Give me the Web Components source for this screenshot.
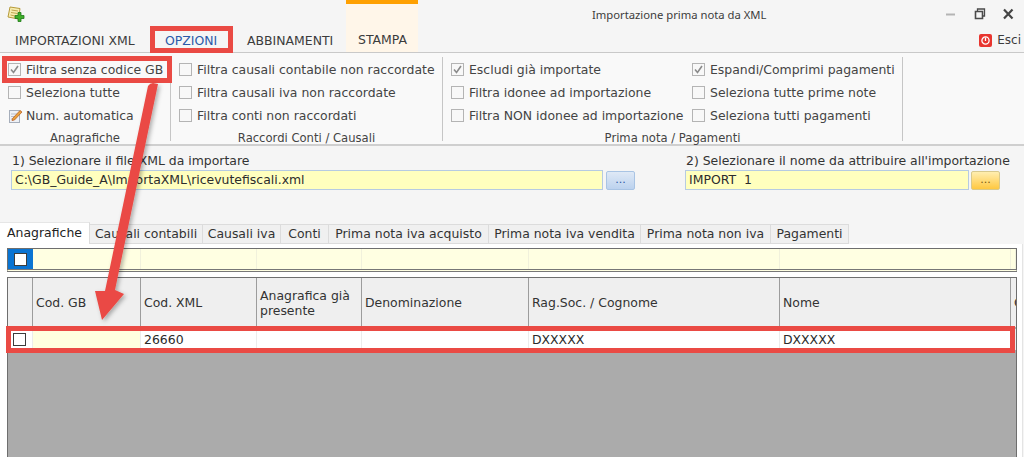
<!DOCTYPE html>
<html>
<head>
<meta charset="utf-8">
<title>Importazione prima nota da XML</title>
<style>
html, body { margin: 0; padding: 0; height: 100%; overflow: hidden; background: #f5f5f5; }
</style>
</head>
<body>
<app-window></app-window>
<script>
class TopBar extends HTMLElement {
  constructor() {
    super();
    this.shadowDOM = this.attachShadow({mode: 'open'});
  }
  connectedCallback() {
    this.shadowDOM.innerHTML = `
    <style>
    :host{
      display:grid;
      grid-template-columns:346px 72px 1fr;
      grid-template-rows:27px 25px;
      height:52px;
      border-bottom:1px solid #c9c9c9;
      font:12.45px 'DejaVu Sans',sans-serif;
      color:#3c3c3c;
    }
    .logo{ padding:6px 0 0 7px; }
    .tabs{ display:flex; align-items:center; height:25px; padding-top:1px; box-sizing:border-box; }
    .tabs span{ display:block; }
    .t1{ margin-left:15px; width:150px; }
    .t2{ width:82px; color:#2c5aa8; }
    .stampa{
      grid-column:2; grid-row:1 / span 2;
      background:#fff6e9;
      border-top:4px solid #ffa000;
      box-sizing:border-box;
      padding:27px 0 0 12px;
      line-height:18px;
    }
    .title{ position:relative; padding:8px 0 0 174px; font:11.25px 'Noto Sans',sans-serif; line-height:14px; }
    .ctrl{ position:absolute; top:0; left:0; }
    .esci{ display:flex; justify-content:flex-end; align-items:center; gap:5px; padding:1px 3px 0 0; font-size:12px; }
    .esci svg{ display:block; }
    </style>
    <div class="logo">
      <svg width="18" height="17" viewBox="0 0 18 17">
        <path d="M3 1 L13 2.5 L11.5 13 L1 11 Z" fill="#f7edb0" stroke="#b69a3a"/>
        <path d="M4.5 4 L11 5 M4 6.5 L10.5 7.5 M3.5 9 L8 10" stroke="#bfa650" fill="none"/>
        <path d="M10 6.5 h3 v3 h3 v3 h-3 v3 h-3 v-3 h-3 v-3 h3 z" transform="translate(1 0)" fill="#3fae2a" stroke="#1e7a16" stroke-width=".8"/>
      </svg>
    </div>
    <div class="stampa">STAMPA</div>
    <div class="title">Importazione prima nota da XML
      <svg class="ctrl" style="left:528px;top:8px" width="70" height="14" viewBox="0 0 70 14">
        <path d="M0 6.5 h9" stroke="#b4b4b4" stroke-width="2"/>
        <path d="M29.5 3.5 h7 v7 h-7 z" fill="none" stroke="#4a4a4a" stroke-width="1.6"/>
        <path d="M31.5 3 v-2 h7 v7 h-2" fill="none" stroke="#4a4a4a" stroke-width="1.3"/>
        <path d="M58 1.5 L66.5 10.5 M66.5 1.5 L58 10.5" stroke="#444" stroke-width="2.2"/>
      </svg>
    </div>
    <div class="tabs" style="grid-column:1;grid-row:2">
      <span class="t1">IMPORTAZIONI XML</span>
      <span class="t2">OPZIONI</span>
      <span>ABBINAMENTI</span>
    </div>
    <div class="esci" style="grid-column:3;grid-row:2">
      <svg width="13" height="13" viewBox="0 0 13 13">
        <rect width="13" height="13" rx="2" fill="#e8352f"/>
        <circle cx="6.5" cy="6.5" r="3.6" fill="none" stroke="#fff" stroke-width="1.3"/>
        <path d="M6.5 3.5 v3.5" stroke="#fff" stroke-width="1.3"/>
      </svg>
      <span>Esci</span>
    </div>`;
  }
}
customElements.define('top-bar', TopBar);

class CheckItem extends HTMLElement {
  constructor() {
    super();
    this.shadowDOM = this.attachShadow({mode: 'open'});
  }
  connectedCallback() {
    let box = `<span class="box">${this.hasAttribute('checked') ? '<svg width="11" height="11" viewBox="0 0 11 11"><path d="M2 5.5 L4.5 8.5 L9 2" fill="none" stroke="#8a8a8a" stroke-width="1.6"/></svg>' : ''}</span>`;
    if (this.hasAttribute('note')) {
      box = `<svg class="note" width="15" height="15" viewBox="0 0 15 15">
        <rect x="1.5" y="2.5" width="10" height="12" fill="#eef1f6" stroke="#a6aebb"/>
        <path d="M3 6 h6 M3 8.5 h5 M3 11 h4" stroke="#b9bfca"/>
        <path d="M4.5 10.5 L12 2.5 L14 4 L6.5 12 L4 12.5 Z" fill="#e8a23c" stroke="#b5541f" stroke-width=".7"/>
      </svg>`;
    }
    this.shadowDOM.innerHTML = `
    <style>
    :host{
      display:flex;
      align-items:center;
      height:23px;
      gap:5px;
      white-space:nowrap;
    }
    .box{
      display:flex;
      align-items:center;
      justify-content:center;
      width:11px;
      height:11px;
      border:1px solid #b4b4b4;
      background:#f8f8f8;
    }
    .note{ margin-right:-2px; }
    </style>
    ${box}<slot></slot>`;
  }
}
customElements.define('check-item', CheckItem);

class RibbonGroup extends HTMLElement {
  constructor() {
    super();
    this.shadowDOM = this.attachShadow({mode: 'open'});
  }
  connectedCallback() {
    this.shadowDOM.innerHTML = `
    <style>
    :host{
      display:flex;
      flex-direction:column;
      box-sizing:border-box;
      border-right:1px solid #c6c6c6;
      height:84px;
      margin-top:4px;
    }
    .cols{
      display:grid;
      grid-auto-flow:column;
      grid-template-rows:repeat(3,23px);
      grid-auto-columns:var(--col,auto);
      padding:1px 0 0 var(--pad,8px);
    }
    .label{
      text-align:center;
      font-size:11.6px;
      line-height:14px;
      margin-top:4px;
    }
    </style>
    <div class="cols"><slot></slot></div>
    <div class="label">${this.getAttribute('label')}</div>`;
  }
}
customElements.define('ribbon-group', RibbonGroup);

class RibbonPanel extends HTMLElement {
  constructor() {
    super();
    this.shadowDOM = this.attachShadow({mode: 'open'});
  }
  connectedCallback() {
    this.shadowDOM.innerHTML = `
    <style>
    :host{
      display:flex;
      height:93px;
      box-sizing:border-box;
      background:#f9f9f9;
      border-bottom:2px solid #cfcfcf;
      font:12.45px 'DejaVu Sans',sans-serif;
      color:#444;
    }
    ::slotted(:nth-child(1)){ width:171px; }
    ::slotted(:nth-child(2)){ width:272px; --pad:8px; }
    ::slotted(:nth-child(3)){ width:460px; --pad:8px; --col:241px; }
    </style>
    <slot></slot>`;
  }
}
customElements.define('ribbon-panel', RibbonPanel);

class FileField extends HTMLElement {
  constructor() {
    super();
    this.shadowDOM = this.attachShadow({mode: 'open'});
  }
  connectedCallback() {
    const tone = this.getAttribute('tone');
    this.shadowDOM.innerHTML = `
    <style>
    :host{
      display:grid;
      grid-template-columns:var(--w) auto;
      grid-template-rows:15px 20px;
      column-gap:var(--g,3px);
      row-gap:2px;
      font:12.45px 'DejaVu Sans',sans-serif;
      color:#333;
    }
    .cap{ grid-column:1 / span 2; line-height:15px; white-space:nowrap; padding-left:1px; }
    .inp{
      box-sizing:border-box;
      height:20px;
      border:1px solid #b6cbe2;
      background:#ffffbe;
      line-height:18px;
      padding-left:3px;
      color:#2c2c2c;
      white-space:pre;
    }
    .btn{
      box-sizing:border-box;
      height:19px;
      width:29px;
      margin-top:1px;
      border:1px solid ${tone === 'gold' ? '#d8c98c' : '#a9c4e4'};
      border-radius:2px;
      background:${tone === 'gold' ? 'linear-gradient(#ffeeb0,#ffc840)' : 'linear-gradient(#dfe9f6,#bcd2ee)'};
      color:${tone === 'gold' ? '#7a5a10' : '#2c5aa8'};
      text-align:center;
      line-height:16px;
      font-size:11px;
    }
    </style>
    <div class="cap">${this.getAttribute('label')}</div>
    <div class="inp">${this.getAttribute('value')}</div>
    <div class="btn">...</div>`;
  }
}
customElements.define('file-field', FileField);

class TabStrip extends HTMLElement {
  constructor() {
    super();
    this.shadowDOM = this.attachShadow({mode: 'open'});
  }
  connectedCallback() {
    const tabs = [
      ['Anagrafiche', 90], ['Causali contabili', 113], ['Causali iva', 78], ['Conti', 48],
      ['Prima nota iva acquisto', 160], ['Prima nota iva vendita', 152], ['Prima nota non iva', 130], ['Pagamenti', 78]
    ];
    this.shadowDOM.innerHTML = `
    <style>
    :host{
      display:flex;
      align-items:flex-end;
      height:24px;
      font:12.45px 'DejaVu Sans',sans-serif;
      color:#333;
    }
    .tab{
      box-sizing:border-box;
      height:20px;
      line-height:18px;
      text-align:center;
      background:#f0f0f0;
      border:1px solid #dcdcdc;
      border-left:0;
      white-space:nowrap;
    }
    .tab.on{
      height:22px;
      line-height:19px;
      background:#fff;
      border-bottom:0;
      border-top-color:#e6e6e6;
      color:#222;
    }
    </style>
    ${tabs.map((t, i) => `<div class="tab ${i === 0 ? 'on' : ''}" style="width:${t[1]}px">${t[0]}</div>`).join('')}`;
  }
}
customElements.define('tab-strip', TabStrip);

class DataGrid extends HTMLElement {
  constructor() {
    super();
    this.shadowDOM = this.attachShadow({mode: 'open'});
  }
  connectedCallback() {
    const cols = '25px 108px 116px 105px 167px 251px 231px 1fr';
    this.shadowDOM.innerHTML = `
    <style>
    :host{
      display:flex;
      flex-direction:column;
      flex:1;
      min-height:0;
      background:#fff;
      border-right:1px solid #e4e4e4;
      margin-right:1px;
      padding:4px 5px 0 7px;
      font:12.45px 'DejaVu Sans',sans-serif;
      color:#333;
    }
    .row{ display:grid; grid-template-columns:${cols}; }
    .filter{
      box-sizing:border-box;
      height:24px;
      background:#ffffe2;
      border:1px solid #6e6e6e;
      border-bottom:3px double #777;
      margin-bottom:5px;
    }
    .filter div{ border-right:1px solid #f1f1dc; }
    .filter .sel{ background:#0a74d2; display:flex; align-items:center; justify-content:center; border:0; }
    .cb{ display:block; box-sizing:border-box; width:13px; height:13px; background:#fff; border:1px solid #3c3c3c; }
    .body{
      flex:1;
      display:flex;
      flex-direction:column;
      background:#ababab;
      border:1px solid #6e6e6e;
      border-bottom:0;
    }
    .head{ height:49px; background:#efefef; }
    .head div{
      display:flex;
      align-items:center;
      padding-left:3px;
      line-height:15px;
      border-right:1px solid #9c9c9c;
      overflow:hidden;
      white-space:nowrap;
    }
    .head div:last-child{ border-right:0; }
    .data{ height:21px; background:#fff; margin-top:2px; margin-bottom:3px; }
    .data div{
      display:flex;
      align-items:center;
      padding-left:3px;
      border-right:1px solid #ececec;
      color:#2a2a2a;
    }
    .data .sel{ padding-left:5px; }
    .data .empty{ background:#ffffdf; }
    </style>
    <div class="row filter">
      <div class="sel"><span class="cb"></span></div><div></div><div></div><div></div><div></div><div></div><div></div><div></div>
    </div>
    <div class="body">
      <div class="row head">
        <div></div><div>Cod. GB</div><div>Cod. XML</div><div style="white-space:normal">Anagrafica già presente</div>
        <div>Denominazione</div><div>Rag.Soc. / Cognome</div><div>Nome</div><div>C</div>
      </div>
      <div class="row data">
        <div class="sel"><span class="cb"></span></div><div class="empty"></div><div>26660</div><div></div><div></div><div>DXXXXX</div><div>DXXXXX</div><div></div>
      </div>
    </div>`;
  }
}
customElements.define('data-grid', DataGrid);

class MarkLayer extends HTMLElement {
  constructor() {
    super();
    this.shadowDOM = this.attachShadow({mode: 'open'});
  }
  connectedCallback() {
    this.shadowDOM.innerHTML = `
    <style>
    :host{
      position:absolute;
      left:0;
      top:0;
      width:1024px;
      height:457px;
      pointer-events:none;
    }
    svg{ display:block; }
    </style>
    <svg width="1024" height="457" viewBox="0 0 1024 457">
      <defs>
        <filter id="sh" x="-30%" y="-5%" width="170%" height="115%">
          <feDropShadow dx="2" dy="2" stdDeviation="2" flood-color="#000" flood-opacity=".3"/>
        </filter>
      </defs>
      <g fill="none" stroke="#ea4a44" stroke-width="5">
        <rect x="152.5" y="28.5" width="78" height="22"/>
        <rect x="4.5" y="58.5" width="165" height="22"/>
        <rect x="8.5" y="328.5" width="1004" height="22"/>
      </g>
      <path filter="url(#sh)" fill="#ea4a44" d="M148 86 Q150 83 153 83 L158 84 L115 290 L124 294 L102 320 L95 291 L105 291 Z"/>
    </svg>`;
  }
}
customElements.define('mark-layer', MarkLayer);

class AppWindow extends HTMLElement {
  constructor() {
    super();
    this.shadowDOM = this.attachShadow({mode: 'open'});
  }
  connectedCallback() {
    this.shadowDOM.innerHTML = `
    <style>
    :host{
      display:flex;
      flex-direction:column;
      position:relative;
      width:1024px;
      height:457px;
      overflow:hidden;
      background:#f5f5f5;
    }
    .form{
      display:flex;
      height:74px;
      box-sizing:border-box;
      padding:7px 0 0 11px;
      --w:592px;
    }
    .form file-field + file-field{ margin-left:50px; --w:284px; --g:2px; }
    </style>
    <top-bar></top-bar>
    <ribbon-panel>
      <ribbon-group label="Anagrafiche">
        <check-item checked>Filtra senza codice GB</check-item>
        <check-item>Seleziona tutte</check-item>
        <check-item note>Num. automatica</check-item>
      </ribbon-group>
      <ribbon-group label="Raccordi Conti / Causali">
        <check-item>Filtra causali contabile non raccordate</check-item>
        <check-item>Filtra causali iva non raccordate</check-item>
        <check-item>Filtra conti non raccordati</check-item>
      </ribbon-group>
      <ribbon-group label="Prima nota / Pagamenti">
        <check-item checked>Escludi già importate</check-item>
        <check-item>Filtra idonee ad importazione</check-item>
        <check-item>Filtra NON idonee ad importazione</check-item>
        <check-item checked>Espandi/Comprimi pagamenti</check-item>
        <check-item>Seleziona tutte prime note</check-item>
        <check-item>Seleziona tutti pagamenti</check-item>
      </ribbon-group>
    </ribbon-panel>
    <div class="form">
      <file-field label="1) Selezionare il file XML da importare" value="C:\\GB_Guide_A\\ImportaXML\\ricevutefiscali.xml"></file-field>
      <file-field label="2) Selezionare il nome da attribuire all'importazione" value="IMPORT  1" tone="gold"></file-field>
    </div>
    <tab-strip></tab-strip>
    <data-grid></data-grid>
    <mark-layer></mark-layer>`;
  }
}
customElements.define('app-window', AppWindow);
</script>
</body>
</html>
